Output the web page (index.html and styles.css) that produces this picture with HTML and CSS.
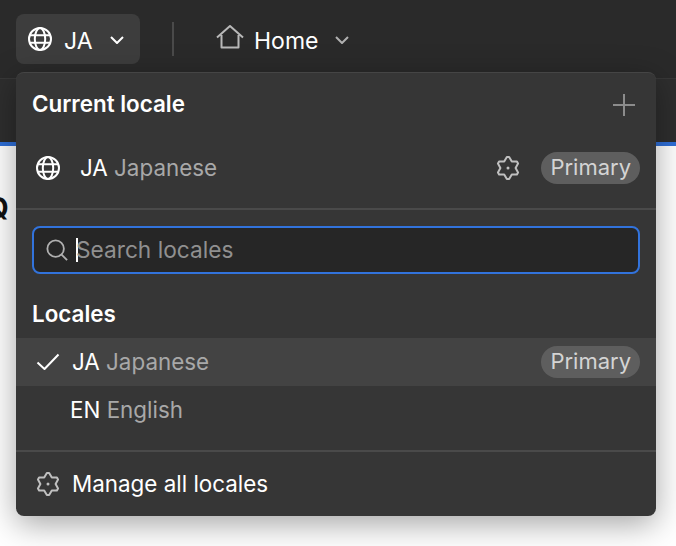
FILE: index.html
```html
<!DOCTYPE html>
<html lang="en">
<head>
  <meta charset="UTF-8" />
  <meta name="viewport" content="width=device-width, initial-scale=1.0" />
  <title>Locales</title>
  <link rel="stylesheet" href="styles.css">
</head>
<body>
  <header class="topbar">
    <button class="locale-btn">
      <svg class="icon-24" viewBox="0 0 24 24"><circle cx="12" cy="12" r="11"/><ellipse cx="12" cy="12" rx="5.2" ry="11"/><path d="M1.6 8.2h20.8M1.6 15.8h20.8"/></svg>
      <span class="locale-btn-label">JA</span>
      <svg class="chevron" viewBox="0 0 14 8"><path d="M1 1l6 6 6-6"/></svg>
    </button>
    <div class="topbar-sep"></div>
    <div class="page-btn">
      <svg class="home-icon" viewBox="0 0 28 24"><path d="M1 12.500L14 1l13 11.500M5.500 10v12.500h17V10"/></svg>
      <span>Home</span>
      <svg class="chevron chevron-dim" viewBox="0 0 14 8"><path d="M1 1l6 6 6-6"/></svg>
    </div>
  </header>
  <div class="subbar"></div>
  <main class="content">
    <h2 class="content-title">Q</h2>
  </main>

  <div class="popover">
    <section class="current">
      <div class="popover-head">
        <h3>Current locale</h3>
        <svg class="plus" viewBox="0 0 24 24"><path d="M12 1v22M1 12h22"/></svg>
      </div>
      <div class="current-row">
        <svg class="icon-24" viewBox="0 0 24 24"><circle cx="12" cy="12" r="11"/><ellipse cx="12" cy="12" rx="5.2" ry="11"/><path d="M1.6 8.2h20.8M1.6 15.8h20.8"/></svg>
        <span class="locale-name">JA <em>Japanese</em></span>
        <svg class="gear" viewBox="0 0 24 24"><path d="M10.850 1.060H13.150L15.800 5.420H20.900L22.050 7.530L19.600 12L22.050 16.470L20.900 18.470H15.800L13.150 22.940H10.850L8.200 18.580H3.100L1.950 16.470L4.400 12L1.950 7.530L3.100 5.530H8.200z"/><circle class="gear-dot" cx="12" cy="12" r="1.500"/></svg>
        <span class="tag">Primary</span>
      </div>
    </section>
    <section class="search-wrap">
      <div class="search">
        <svg class="search-icon" viewBox="0 0 24 24"><circle cx="10.500" cy="10.500" r="9"/><path d="M17 17l6 6"/></svg>
        <span class="caret"></span>
        <span class="placeholder">Search locales</span>
      </div>
    </section>
    <h3 class="locales-title">Locales</h3>
    <ul class="locale-list">
      <li class="selected">
        <svg class="check" viewBox="0 0 24 18"><path d="M1.500 9.500L8.500 16 22.500 1.500"/></svg>
        <span class="locale-name">JA <em>Japanese</em></span>
        <span class="tag">Primary</span>
      </li>
      <li>
        <span class="locale-name">EN <em>English</em></span>
      </li>
    </ul>
    <footer class="manage">
      <svg class="gear" viewBox="0 0 24 24"><path d="M10.850 1.060H13.150L15.800 5.420H20.900L22.050 7.530L19.600 12L22.050 16.470L20.900 18.470H15.800L13.150 22.940H10.850L8.200 18.580H3.100L1.950 16.470L4.400 12L1.950 7.530L3.100 5.530H8.200z"/><circle class="gear-dot" cx="12" cy="12" r="1.500"/></svg>
      <span>Manage all locales</span>
    </footer>
  </div>
</body>
</html>
```

FILE: styles.css
```css
* {
  box-sizing: border-box;
}
html, body {
  height: 100%;
}
body {
  font-family: Inter, "Noto Sans", sans-serif;
  font-size: 22.4px;
  background-color: #fff;
  color: #fff;
  margin: 0;
  overflow: hidden;
}
svg {
  fill: none;
  stroke: currentColor;
  stroke-width: 2;
  stroke-linejoin: round;
  flex: none;
}
h3 {
  margin: 0;
  font-size: 22.4px;
  font-weight: 600;
}
.topbar {
  height: 79px;
  padding: 14px 16px 0;
  display: flex;
  align-items: flex-start;
  background-color: #2a2a2a;
  border-bottom: 1px solid #383838;
}
.locale-btn {
  width: 124px;
  height: 50px;
  padding: 0 12px;
  display: flex;
  align-items: center;
  background-color: #3d3d3d;
  color: #fff;
  border: none;
  border-radius: 8px;
  font: inherit;
  font-size: 23px;
}
.icon-24 {
  width: 24px;
  height: 24px;
}
.locale-btn-label {
  margin-left: 12px;
  padding-top: 3px;
}
.chevron {
  width: 14px;
  height: 8px;
  margin: 2px 0 0 17px;
}
.chevron-dim {
  color: #b0b0b0;
  margin-left: 17px;
}
.topbar-sep {
  width: 2px;
  height: 34px;
  margin: 8px 0 0 32px;
  background-color: #4a4a4a;
}
.page-btn {
  height: 50px;
  margin-left: 42px;
  display: flex;
  align-items: center;
  font-size: 23px;
}
.page-btn span {
  margin-left: 10px;
  padding-top: 3px;
}
.home-icon {
  width: 28px;
  height: 24px;
  color: #b8b8b8;
  margin-top: -4px;
}
.subbar {
  height: 63px;
  background-color: #2e2e2e;
}
.content {
  border-top: 4px solid #2f6fd8;
  height: 404px;
  background-color: #fff;
  color: #111;
}
.content-title {
  margin: 46px 0 0 -13px;
  font-size: 28px;
  font-weight: 700;
  line-height: 32px;
}
.popover {
  position: absolute;
  left: 16px;
  top: 72px;
  width: 640px;
  height: 444px;
  background-color: #363636;
  border-radius: 8px;
  border-top: 1px solid #454545;
  box-shadow: 0 8px 32px rgba(0,0,0,0.36);
  display: flex;
  flex-direction: column;
}
.popover-head {
  height: 61px;
  padding: 0 20px 0 16px;
  display: flex;
  justify-content: space-between;
  align-items: center;
}
.plus {
  width: 24px;
  height: 24px;
  color: #8c8c8c;
  margin-top: 2px;
}
.current {
  height: 137px;
  border-bottom: 2px solid #4a4a4a;
}
.current-row {
  height: 48px;
  margin-top: 10px;
  padding: 0 16px 0 20px;
  display: flex;
  align-items: center;
}
.current-row .locale-name {
  margin-left: 20px;
  flex: 1;
}
.locale-name {
  padding-bottom: 2px;
}
.locale-name em {
  font-style: normal;
  color: #a8a8a8;
}
.gear {
  width: 24px;
  height: 24px;
  color: #c0c0c0;
}
.current-row .gear {
  margin-left: 1px;
}
.gear-dot {
  fill: currentColor;
  stroke: none;
}
.tag {
  height: 32px;
  padding: 0 9px;
  margin-left: 21px;
  background-color: #5e5e5e;
  color: #d4d4d4;
  border-radius: 16px;
  line-height: 31px;
  font-size: 22px;
}
.search-wrap {
  padding: 16px 16px 0;
}
.search {
  height: 48px;
  padding: 0 12px;
  display: flex;
  align-items: center;
  background-color: #262626;
  border: 2px solid #3273dc;
  border-radius: 8px;
  font-size: 22.7px;
}
.search-icon {
  width: 22px;
  height: 22px;
  color: #b0b0b0;
}
.caret {
  width: 2px;
  height: 24px;
  margin-left: 8px;
  background-color: #fff;
}
.placeholder {
  margin-left: -2px;
  padding-bottom: 2px;
  color: #909090;
}
.locales-title {
  margin-top: 26px;
  padding-left: 16px;
  line-height: 28px;
}
.locale-list {
  list-style: none;
  margin: 10px 0 0;
  padding: 0;
}
.locale-list li {
  height: 48px;
  padding: 0 16px 0 54px;
  display: flex;
  align-items: center;
}
.locale-list .selected {
  padding-left: 20px;
  background-color: #434343;
}
.locale-list .locale-name {
  flex: 1;
}
.locale-list .selected .locale-name {
  margin-left: 12px;
}
.check {
  width: 24px;
  height: 18px;
}
.manage {
  margin-top: 16px;
  height: 66px;
  padding: 0 20px;
  border-top: 2px solid #4a4a4a;
  display: flex;
  align-items: center;
}
.manage span {
  margin-left: 12px;
  padding-bottom: 2px;
}
```
